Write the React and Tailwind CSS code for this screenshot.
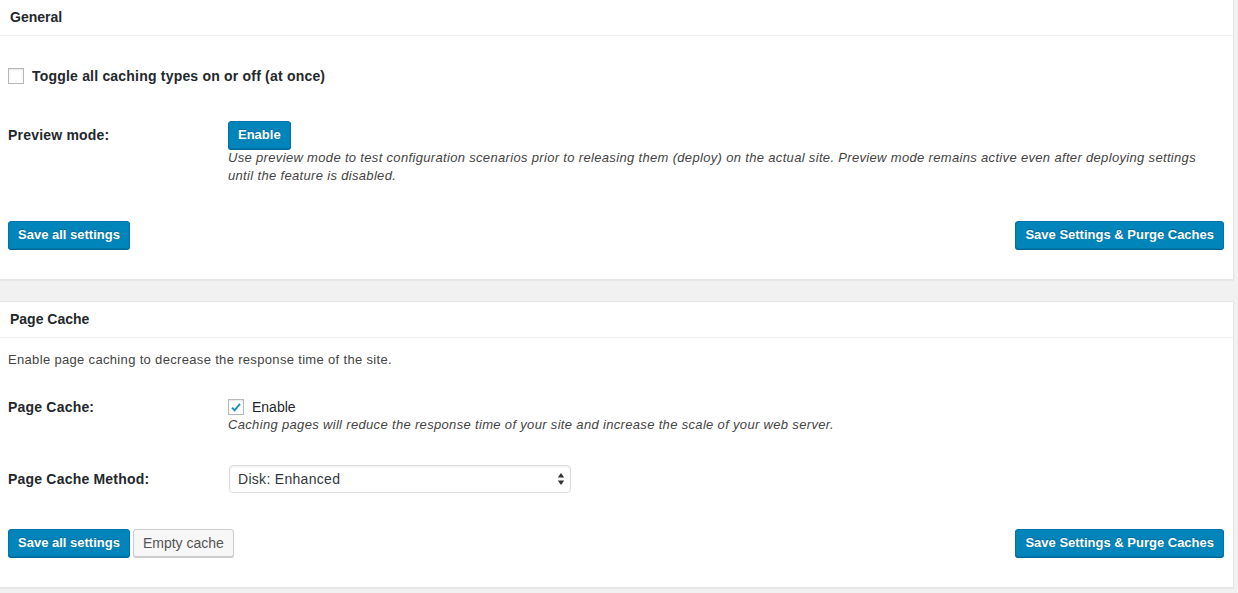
import React from "react";

const Checkbox = ({ checked }) => (
  <span className="inline-flex h-4 w-4 shrink-0 items-center justify-center border border-[#b4b9be] bg-white shadow-[inset_0_1px_2px_rgba(0,0,0,0.1)]">
    {checked && (
      <svg viewBox="0 0 16 16" className="h-[15px] w-[15px]">
        <path d="M3.4 8.2 L6.4 11.2 L12.6 3.8" fill="none" stroke="#1e8cbe" strokeWidth="2.2" />
      </svg>
    )}
  </span>
);

const PrimaryButton = ({ children }) => (
  <button className="h-[28px] rounded-[3px] border border-[#0073aa] bg-[#0085ba] px-[9px] text-[13px] font-bold leading-[26px] text-white shadow-[0_1px_0_#006799] [text-shadow:0_-1px_1px_#006799]">
    {children}
  </button>
);

const SecondaryButton = ({ children }) => (
  <button className="h-[28px] rounded-[3px] border border-[#cccccc] bg-[#f7f7f7] px-[9px] text-[14px] leading-[26px] text-[#555555] shadow-[0_1px_0_#cccccc]">
    {children}
  </button>
);

const Panel = ({ title, topBorder, children }) => (
  <div
    className={`border-r border-b border-[#e5e5e5] bg-white shadow-[0_1px_1px_rgba(0,0,0,0.04)] ${
      topBorder ? "border-t" : ""
    }`}
  >
    <div className="flex h-[36px] items-center border-b border-[#eeeeee] px-[10px] text-[14px] font-bold text-[#23282d]">
      {title}
    </div>
    <div className="px-2">{children}</div>
  </div>
);

export default function App() {
  return (
    <div
      className="h-screen overflow-hidden bg-[#f1f1f1] pr-1 text-[#444444]"
      style={{ fontFamily: '"Liberation Sans", Arial, sans-serif' }}
    >
      {/* General */}
      <Panel title="General">
        <div className="mt-8 flex items-center gap-2 text-[14px] font-bold tracking-[0.2px] text-[#23282d]">
          <Checkbox />
          <span className="leading-4">Toggle all caching types on or off (at once)</span>
        </div>

        <div className="mt-[37px] flex items-start">
          <div className="w-[220px] shrink-0 text-[14px] font-bold leading-[28px] tracking-[0.2px] text-[#23282d]">
            Preview mode:
          </div>
          <div className="pr-[20px]">
            <PrimaryButton>Enable</PrimaryButton>
            <p className="text-[13px] italic leading-[18px] tracking-[0.33px] text-[#444444]">
              Use preview mode to test configuration scenarios prior to releasing them (deploy) on the
              actual site. Preview mode remains active even after deploying settings until the feature is
              disabled.
            </p>
          </div>
        </div>

        <div className="mt-[36px] flex items-center justify-between pb-[30px] pr-[1px]">
          <PrimaryButton>Save all settings</PrimaryButton>
          <PrimaryButton>Save Settings &amp; Purge Caches</PrimaryButton>
        </div>
      </Panel>

      <div className="h-[21px]" />

      {/* Page Cache */}
      <Panel title="Page Cache" topBorder>
        <p className="mt-[13px] text-[13px] leading-[18px] tracking-[0.33px]">
          Enable page caching to decrease the response time of the site.
        </p>

        <div className="mt-[29px] flex items-start">
          <div className="w-[220px] shrink-0 text-[14px] font-bold leading-[18px] tracking-[0.2px] text-[#23282d]">
            Page Cache:
          </div>
          <div>
            <div className="flex h-[18px] items-center gap-2 text-[14px] text-[#23282d]">
              <Checkbox checked />
              <span>Enable</span>
            </div>
            <p className="text-[13px] italic leading-[18px] tracking-[0.33px]">
              Caching pages will reduce the response time of your site and increase the scale of your web
              server.
            </p>
          </div>
        </div>

        <div className="mt-[31px] flex items-center">
          <div className="w-[220px] shrink-0 text-[14px] font-bold tracking-[0.2px] text-[#23282d]">
            Page Cache Method:
          </div>
          <div className="relative ml-px w-[342px]">
            <select
              defaultValue="enhanced"
              className="h-[28px] w-full appearance-none rounded-[4px] border border-[#dddddd] bg-white pl-2 text-[14px] tracking-[0.3px] text-[#32373c] shadow-[inset_0_1px_2px_rgba(0,0,0,0.07)] outline-none"
            >
              <option value="enhanced">Disk: Enhanced</option>
              <option value="basic">Disk: Basic</option>
            </select>
            <svg
              viewBox="0 0 8 14"
              className="pointer-events-none absolute right-[6px] top-[7px] h-[14px] w-[8px]"
            >
              <path d="M4 1 L7.2 5.6 H0.8 Z M4 13 L7.2 8.4 H0.8 Z" fill="#333333" />
            </svg>
          </div>
        </div>

        <div className="mt-[36px] flex items-center justify-between pb-[30px] pr-[1px]">
          <div className="flex gap-[3px]">
            <PrimaryButton>Save all settings</PrimaryButton>
            <SecondaryButton>Empty cache</SecondaryButton>
          </div>
          <PrimaryButton>Save Settings &amp; Purge Caches</PrimaryButton>
        </div>
      </Panel>
    </div>
  );
}
